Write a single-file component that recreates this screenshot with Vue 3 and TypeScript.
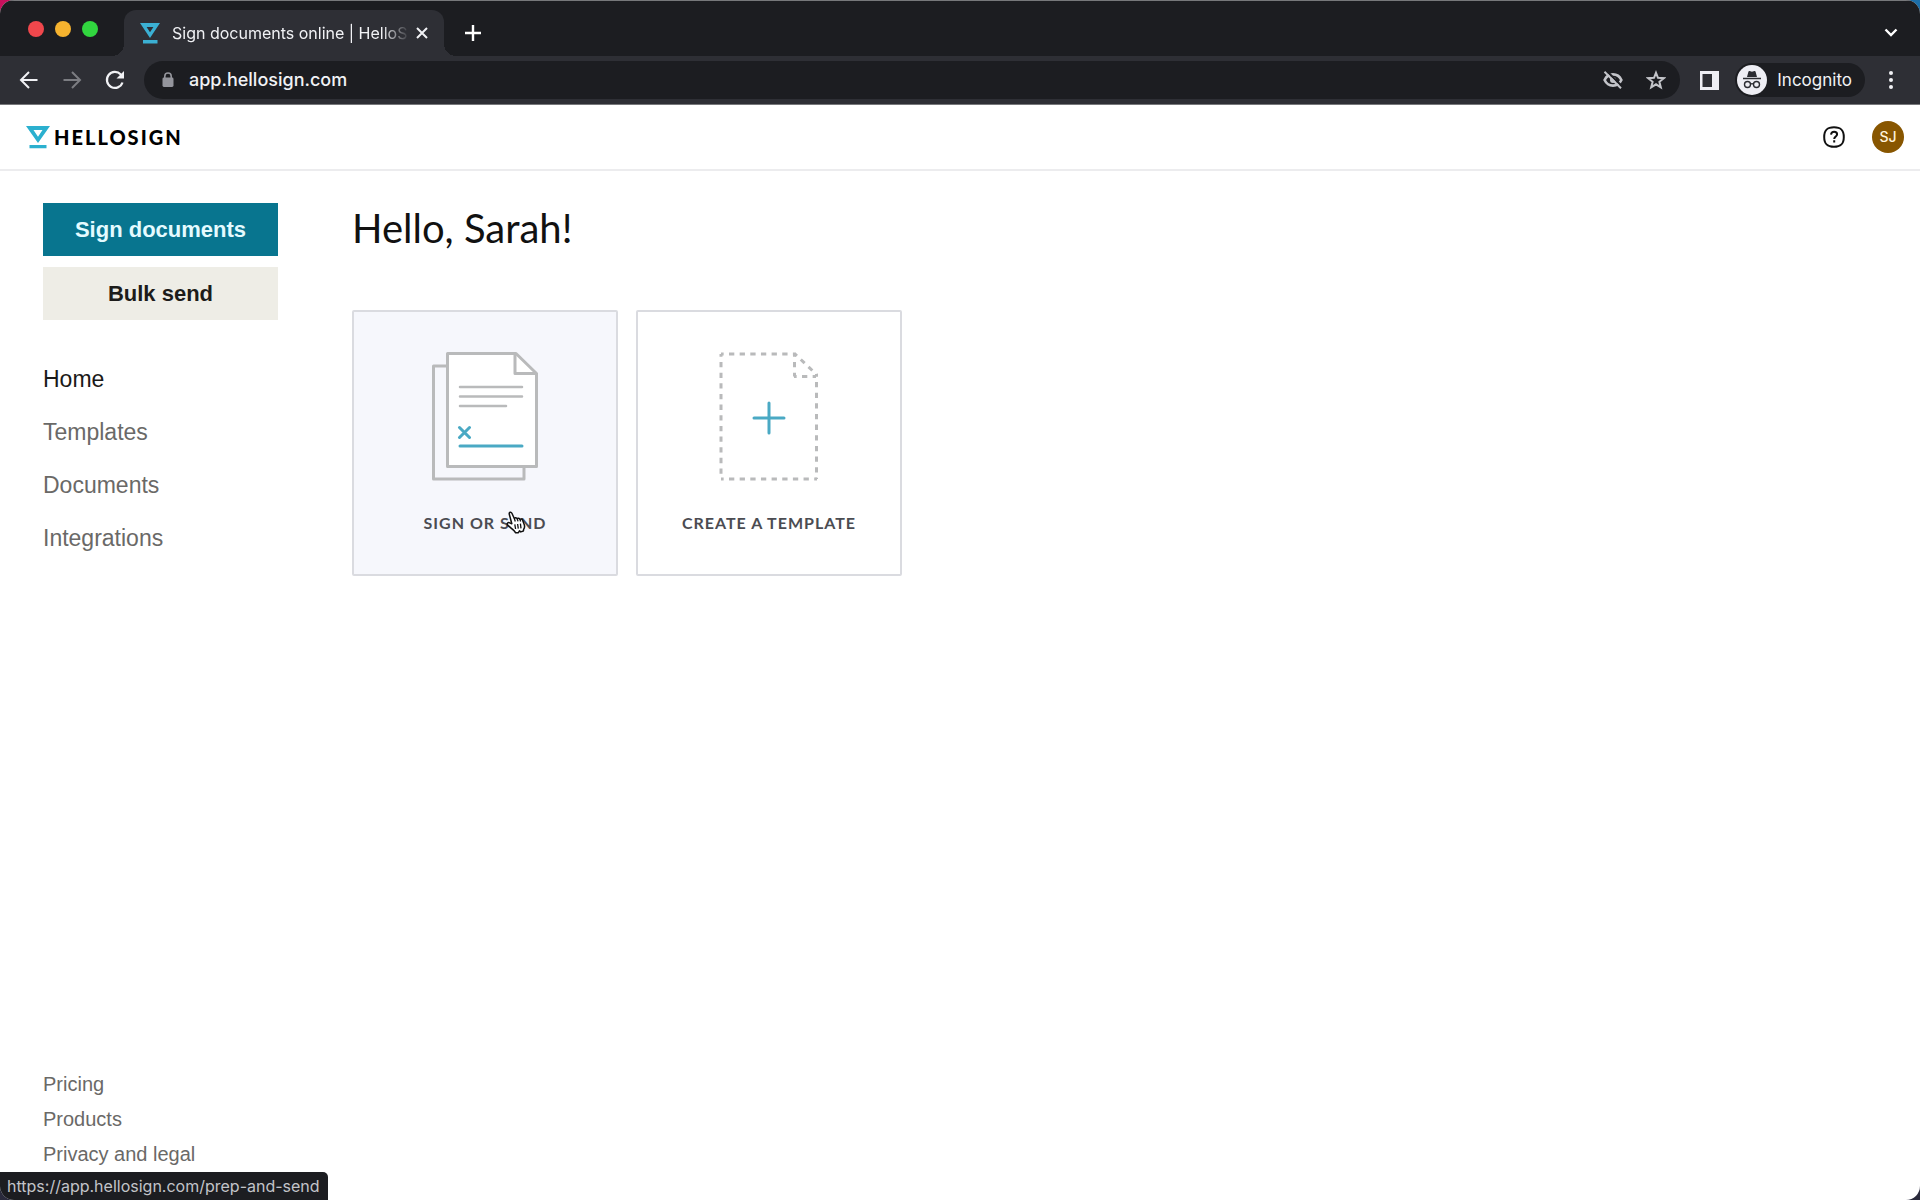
<script setup lang="ts">
import { ref } from 'vue'

interface LinkItem {
  label: string
  href: string
}

const address = ref('app.hellosign.com')
const current = ref('Home')

const navLinks: LinkItem[] = [
  { label: 'Home', href: '#home' },
  { label: 'Templates', href: '#templates' },
  { label: 'Documents', href: '#documents' },
  { label: 'Integrations', href: '#integrations' },
]

const footerLinks: LinkItem[] = [
  { label: 'Pricing', href: '#pricing' },
  { label: 'Products', href: '#products' },
  { label: 'Privacy and legal', href: '#privacy' },
]
</script>

<template>
  <div class="desktop">
    <div class="window">
      <div class="tab-strip">
        <div class="lights">
          <button class="light close" type="button" aria-label="Close window"></button>
          <button class="light minimise" type="button" aria-label="Minimise window"></button>
          <button class="light expand" type="button" aria-label="Expand window"></button>
        </div>
        <div class="tab">
          <svg class="favicon" width="20" height="21" viewBox="0 0 20 21" aria-hidden="true">
            <path fill="#3bb0d3" fill-rule="evenodd" d="M0 0h20L10 15zM6.600 4L10 9.200 13.400 4z" />
            <path fill="#3bb0d3" d="M3 17h14.500v3.500H3z" />
          </svg>
          <span class="tab-title">Sign documents online | HelloS</span>
          <button class="icon-button tab-close" type="button" aria-label="Close tab">
            <svg width="12" height="12" viewBox="0 0 12 12"><path d="M1 1l10 10M11 1L1 11" stroke="#f1f2f5" stroke-width="2" /></svg>
          </button>
        </div>
        <button class="icon-button new-tab" type="button" aria-label="New tab">
          <svg width="16" height="16" viewBox="0 0 16 16"><path d="M8 0v16M0 8h16" stroke="#fff" stroke-width="2.400" /></svg>
        </button>
        <button class="icon-button tab-search" type="button" aria-label="Search tabs">
          <svg width="14" height="9" viewBox="0 0 14 9"><path d="M1.500 1.500L7 7l5.500-5.500" fill="none" stroke="#fff" stroke-width="2.400" /></svg>
        </button>
      </div>

      <div class="toolbar">
        <div class="history">
          <button class="icon-button" type="button" aria-label="Back">
            <svg width="20" height="20" viewBox="0 0 20 20"><path d="M18.500 10H2.500M10 2L2 10l8 8" fill="none" stroke="#f1f2f5" stroke-width="2" /></svg>
          </button>
          <button class="icon-button" type="button" aria-label="Forward">
            <svg width="20" height="20" viewBox="0 0 20 20"><path d="M1.500 10h16M10 2l8 8-8 8" fill="none" stroke="#7c7d82" stroke-width="2" /></svg>
          </button>
          <button class="icon-button" type="button" aria-label="Reload">
            <svg width="20" height="20" viewBox="0 0 20 20">
              <path d="M17.500 12.500A8 8 0 1 1 15.800 4.500L17 5.700" fill="none" stroke="#f1f2f5" stroke-width="2.200" />
              <path d="M19 1v7.500h-7.500z" fill="#f1f2f5" />
            </svg>
          </button>
        </div>
        <div class="omnibox">
          <svg width="12" height="16" viewBox="0 0 12 16" aria-hidden="true">
            <path d="M2.800 7V4.200a3.200 3.200 0 0 1 6.400 0V7" fill="none" stroke="#94959c" stroke-width="1.600" />
            <rect x="0.500" y="5.500" width="11" height="9.500" rx="1.400" fill="#94959c" />
          </svg>
          <input v-model="address" class="address" type="text" aria-label="Address" />
          <button class="icon-button" type="button" aria-label="Third-party cookies blocked">
            <svg width="20" height="18" viewBox="0 0 20 18">
              <path d="M1.600 9C3.400 5.200 6.400 3.400 10 3.400S16.600 5.200 18.400 9c-1.800 3.800-4.800 5.600-8.400 5.600S3.400 12.800 1.600 9z" fill="none" stroke="#c3c4c9" stroke-width="2.600" />
              <circle cx="10" cy="9" r="3" fill="#c3c4c9" />
              <path d="M3.600 0L19.900 16.300" stroke="#1c1d21" stroke-width="2.200" />
              <path d="M1.500 0.800L18 17.300" stroke="#c3c4c9" stroke-width="2" />
            </svg>
          </button>
          <button class="icon-button" type="button" aria-label="Bookmark this tab">
            <svg width="20" height="20" viewBox="0 0 20 20"><path d="M10 2.800l2 5 5.800.4-4.400 3.600 1.400 5.600L10 14.300l-4.800 3.100 1.400-5.600L2.200 8.200 8 7.800z" fill="none" stroke="#c3c4c9" stroke-width="2" /></svg>
          </button>
        </div>
        <button class="icon-button side-panel" type="button" aria-label="Side panel">
          <svg width="19" height="19" viewBox="0 0 19 19"><path fill="#eeeef4" fill-rule="evenodd" d="M0 0h19v19H0zM2.500 3v13H12V3z" /></svg>
        </button>
        <button class="profile" type="button">
          <svg width="30" height="30" viewBox="0 0 30 30" aria-hidden="true">
            <circle cx="15" cy="15" r="15" fill="#eeeef4" />
            <path d="M10 12l1.400-5.300c.2-.6.700-.8 1.200-.6l2.400.6 2.400-.6c.5-.2 1 0 1.200.6L20 12z" fill="#2b2c32" />
            <path d="M6 13.500h18" stroke="#2b2c32" stroke-width="1.500" />
            <circle cx="10.500" cy="19.500" r="3" fill="none" stroke="#2b2c32" stroke-width="1.400" />
            <circle cx="19.500" cy="19.500" r="3" fill="none" stroke="#2b2c32" stroke-width="1.400" />
            <path d="M13.400 19.200q1.600-1 3.200 0" fill="none" stroke="#2b2c32" stroke-width="1.300" />
          </svg>
          <span>Incognito</span>
        </button>
        <button class="icon-button menu" type="button" aria-label="Browser menu">
          <svg width="4" height="18" viewBox="0 0 4 18" fill="#f1f2f5"><circle cx="2" cy="2" r="2" /><circle cx="2" cy="9" r="2" /><circle cx="2" cy="16" r="2" /></svg>
        </button>
      </div>

      <header class="site-header">
        <a class="brand" href="#home">
          <svg width="24" height="24" viewBox="0 0 24 24" aria-hidden="true">
            <path fill="#2bb0cf" fill-rule="evenodd" d="M0 1h24L12 18zM7.500 5L12 11.800 16.500 5z" />
            <path fill="#2bb0cf" d="M3.500 20h17v3.200h-17z" />
          </svg>
          <span>HELLOSIGN</span>
        </a>
        <div class="account">
          <button class="icon-button" type="button" aria-label="Help">
            <svg width="22" height="22" viewBox="0 0 22 22" fill="none" stroke="#111" stroke-width="2">
              <path d="M11 1.200c7 0 9.800 2.800 9.800 9.800s-2.800 9.800-9.800 9.800S1.200 18 1.200 11 4 1.200 11 1.200z" />
              <path d="M8 8.600c.2-1.900 1.400-2.900 3.100-2.900 1.800 0 3 1 3 2.600 0 2.200-2.900 2.200-2.900 4.700" />
              <path d="M11.200 14.300v2.200" />
            </svg>
          </button>
          <button class="avatar" type="button">SJ</button>
        </div>
      </header>

      <div class="body">
        <aside class="sidebar">
          <button class="action primary" type="button">Sign documents</button>
          <button class="action secondary" type="button">Bulk send</button>
          <nav class="nav" aria-label="Main">
            <a
              v-for="link in navLinks"
              :key="link.label"
              :href="link.href"
              :class="{ active: link.label === current }"
              @click="current = link.label"
            >{{ link.label }}</a>
          </nav>
          <nav class="legal" aria-label="Footer">
            <a v-for="link in footerLinks" :key="link.label" :href="link.href">{{ link.label }}</a>
          </nav>
        </aside>

        <main class="content">
          <h1>Hello, Sarah!</h1>
          <div class="cards">
            <a class="card hovered" href="#prep-and-send">
              <svg width="106" height="129" viewBox="0 0 106 129" fill="none" stroke="#b9babb" stroke-width="3" stroke-linejoin="round" aria-hidden="true">
                <path d="M15 14H1.500v113H92v-12" />
                <path d="M15.500 1.500H84l20.500 20v93h-89z" fill="#fff" />
                <path d="M83 1.500v20h21" />
                <path d="M28 35h62M28 44.500h62M28 54h46" stroke-width="2.500" stroke-linecap="round" />
                <path d="M27.500 75.500l10 10M37.500 75.500l-10 10M28 94h62" stroke="#4aa9c4" stroke-linecap="round" />
              </svg>
              <span>SIGN OR SEND</span>
              <svg class="pointer" width="20" height="23" viewBox="0 0 20 23" aria-hidden="true">
                <path
                  d="M5.800 12.800L3.300 3.300C2.800 1.200 5 .4 5.900 2.300L8.300 7.500c.7-1.200 2.300-1 2.900.3.700-1 2.200-.8 2.700.5.900-.8 2.300-.4 2.700 1l1.700 4.400c.5 1.700.3 3.200-.6 4.400l-.3 1.900-2.600.9-1.300-1.100-1.100 1.900H9.600l-1.500-1.900c-1.500-1.900-3.500-2.900-5.900-5.200-1.900-1.800-.3-3.700 1.500-2.700z"
                  fill="#fff"
                  stroke="#111"
                  stroke-width="1.500"
                  stroke-linejoin="round"
                />
                <path d="M8.300 7.500l1 3M11.200 7.800l.8 2.600M13.900 8.300l.7 2.200M8.800 13.300l.8 4.700M11.600 13l.7 4.700M14.400 12.700l.6 4.600" stroke="#111" stroke-width="1.300" />
              </svg>
            </a>
            <a class="card" href="#create-template">
              <svg width="100" height="129" viewBox="0 0 100 129" fill="none" stroke="#b9babb" stroke-width="3" aria-hidden="true">
                <g stroke-dasharray="5.300 5.350" stroke-dashoffset="2.650">
                  <path d="M2 2h75" />
                  <path d="M2 2v125" />
                  <path d="M2 127h96" />
                  <path d="M97.500 22v105" />
                  <path d="M76 2l22 21" />
                  <path d="M75.500 2v22.500" />
                  <path d="M75 24.500h22" />
                </g>
                <path d="M50 51v30M35 66h30" stroke="#4aa9c4" stroke-linecap="round" />
              </svg>
              <span>CREATE A TEMPLATE</span>
            </a>
          </div>
        </main>
      </div>

      <div class="status" role="status">https://app.hellosign.com/prep-and-send</div>
    </div>
  </div>
</template>

<style>
body {
  margin: 0;
}
</style>

<style scoped>
* {
  box-sizing: border-box;
}

.desktop {
  display: flex;
  min-height: 100vh;
  background:
    linear-gradient(to right, #c8105c, #1b6ea8) top / 100% 50% no-repeat,
    #2a2a3c;
}

button {
  padding: 0;
  border: 0;
  background: none;
  font: inherit;
  cursor: pointer;
}

a {
  text-decoration: none;
}

svg {
  display: block;
  flex: none;
}

.window {
  position: relative;
  flex: 1;
  display: flex;
  flex-direction: column;
  overflow: hidden;
  border-radius: 14px;
  background: #fff;
  font-family: "Liberation Sans", Arial, sans-serif;
}

.icon-button {
  flex: none;
  display: flex;
  align-items: center;
  justify-content: center;
}

/* Browser tabs */
.tab-strip {
  display: flex;
  align-items: center;
  height: 56px;
  padding: 8px 22px 0 0;
  border-top: 1px solid #77787b;
  background: #1c1d21;
  font-family: Inter, sans-serif;
}

.lights {
  display: flex;
  gap: 11px;
  width: 124px;
  padding-left: 28px;
  margin-bottom: 8px;
}

.light {
  width: 16px;
  height: 16px;
  border-radius: 50%;
}

.close {
  background: #f0474c;
}

.minimise {
  background: #f6b32f;
}

.expand {
  background: #31d63f;
}

.tab {
  position: relative;
  align-self: flex-end;
  display: flex;
  align-items: center;
  width: 320px;
  height: 46px;
  padding: 0 16px;
  border-radius: 12px 12px 0 0;
  background: #2e2f35;
}

.tab::before,
.tab::after {
  content: "";
  position: absolute;
  bottom: 0;
  width: 12px;
  height: 12px;
}

.tab::before {
  right: 100%;
  background: radial-gradient(circle at 0 0, transparent 12px, #2e2f35 12px);
}

.tab::after {
  left: 100%;
  background: radial-gradient(circle at 100% 0, transparent 12px, #2e2f35 12px);
}

.tab-title {
  flex: 1;
  overflow: hidden;
  margin: 0 6px 0 12px;
  color: #f1f2f5;
  font-size: 16px;
  line-height: 24px;
  white-space: nowrap;
  mask-image: linear-gradient(to right, #000 88%, transparent);
}

.new-tab {
  margin-left: 21px;
}

.tab-search {
  margin-left: auto;
}

/* Address bar */
.toolbar {
  display: flex;
  align-items: center;
  height: 49px;
  padding-right: 27px;
  border-bottom: 1px solid #77787b;
  background: #2e2f35;
  font-family: Inter, sans-serif;
}

.history {
  display: flex;
  gap: 23px;
  width: 144px;
  padding-left: 19px;
}

.omnibox {
  flex: 1;
  display: flex;
  align-items: center;
  gap: 23px;
  height: 38px;
  padding: 0 14px 0 18px;
  border-radius: 19px;
  background: #1c1d21;
}

.address {
  flex: 1;
  min-width: 0;
  margin-left: -8px;
  padding: 0;
  border: 0;
  outline: 0;
  background: none;
  color: #f1f2f5;
  font: 500 18px/24px Inter, sans-serif;
}

.side-panel {
  margin-left: 20px;
}

.profile {
  display: flex;
  align-items: center;
  gap: 10px;
  height: 34px;
  margin: 0 24px 0 16px;
  padding: 0 13px 0 2px;
  border-radius: 17px;
  background: #1c1d21;
  color: #f1f2f5;
  font-size: 17px;
}

/* Site header */
.site-header {
  display: flex;
  align-items: center;
  justify-content: space-between;
  height: 66px;
  padding: 0 16px 0 26px;
  border-bottom: 2px solid #ececee;
}

.brand {
  display: flex;
  align-items: center;
  gap: 4px;
  color: #000;
  font: 900 20px/24px Lato, sans-serif;
  letter-spacing: 2px;
}

.account {
  display: flex;
  align-items: center;
  gap: 27px;
}

.avatar {
  width: 32px;
  height: 32px;
  border-radius: 50%;
  background: #885600;
  color: #fff3dc;
  font: 500 14px/32px Inter, sans-serif;
}

/* Page */
.body {
  flex: 1;
  display: flex;
}

.sidebar {
  display: flex;
  flex-direction: column;
  width: 235px;
  margin: 32px 74px 28px 43px;
}

.action {
  height: 53px;
  margin-bottom: 11px;
  font-size: 22px;
  font-weight: 700;
}

.primary {
  background: #08758f;
  color: #e4fbff;
}

.secondary {
  background: #eeede6;
  color: #1d1c1a;
}

.nav {
  display: flex;
  flex-direction: column;
  margin-top: 22px;
  font-size: 23px;
  line-height: 53px;
}

.nav a,
.legal a {
  color: #6a6967;
}

.nav .active {
  color: #1a1918;
}

.legal {
  display: flex;
  flex-direction: column;
  margin-top: auto;
  font-size: 20px;
  line-height: 35px;
}

.content {
  flex: 1;
  padding-top: 31px;
}

h1 {
  margin: 0 0 56px;
  color: #111;
  font: 400 40px/52px Lato, sans-serif;
}

.cards {
  display: flex;
  flex-wrap: wrap;
  gap: 18px;
}

.card {
  position: relative;
  display: flex;
  flex-direction: column;
  align-items: center;
  gap: 30px;
  width: 266px;
  height: 266px;
  padding-top: 40px;
  border: 2px solid #dadbe0;
  border-radius: 2px;
  color: #4b4c52;
  font: 700 16px/24px Lato, sans-serif;
  letter-spacing: 1px;
}

.hovered {
  background: #f6f7fc;
}

.pointer {
  position: absolute;
  top: 199px;
  left: 152px;
}

.status {
  position: absolute;
  bottom: 0;
  left: 0;
  height: 28px;
  padding: 0 8px 0 7px;
  border-radius: 0 5px 0 0;
  background: #1c1d21;
  color: #c3c4c9;
  font: 16px/28px Inter, sans-serif;
}
</style>
